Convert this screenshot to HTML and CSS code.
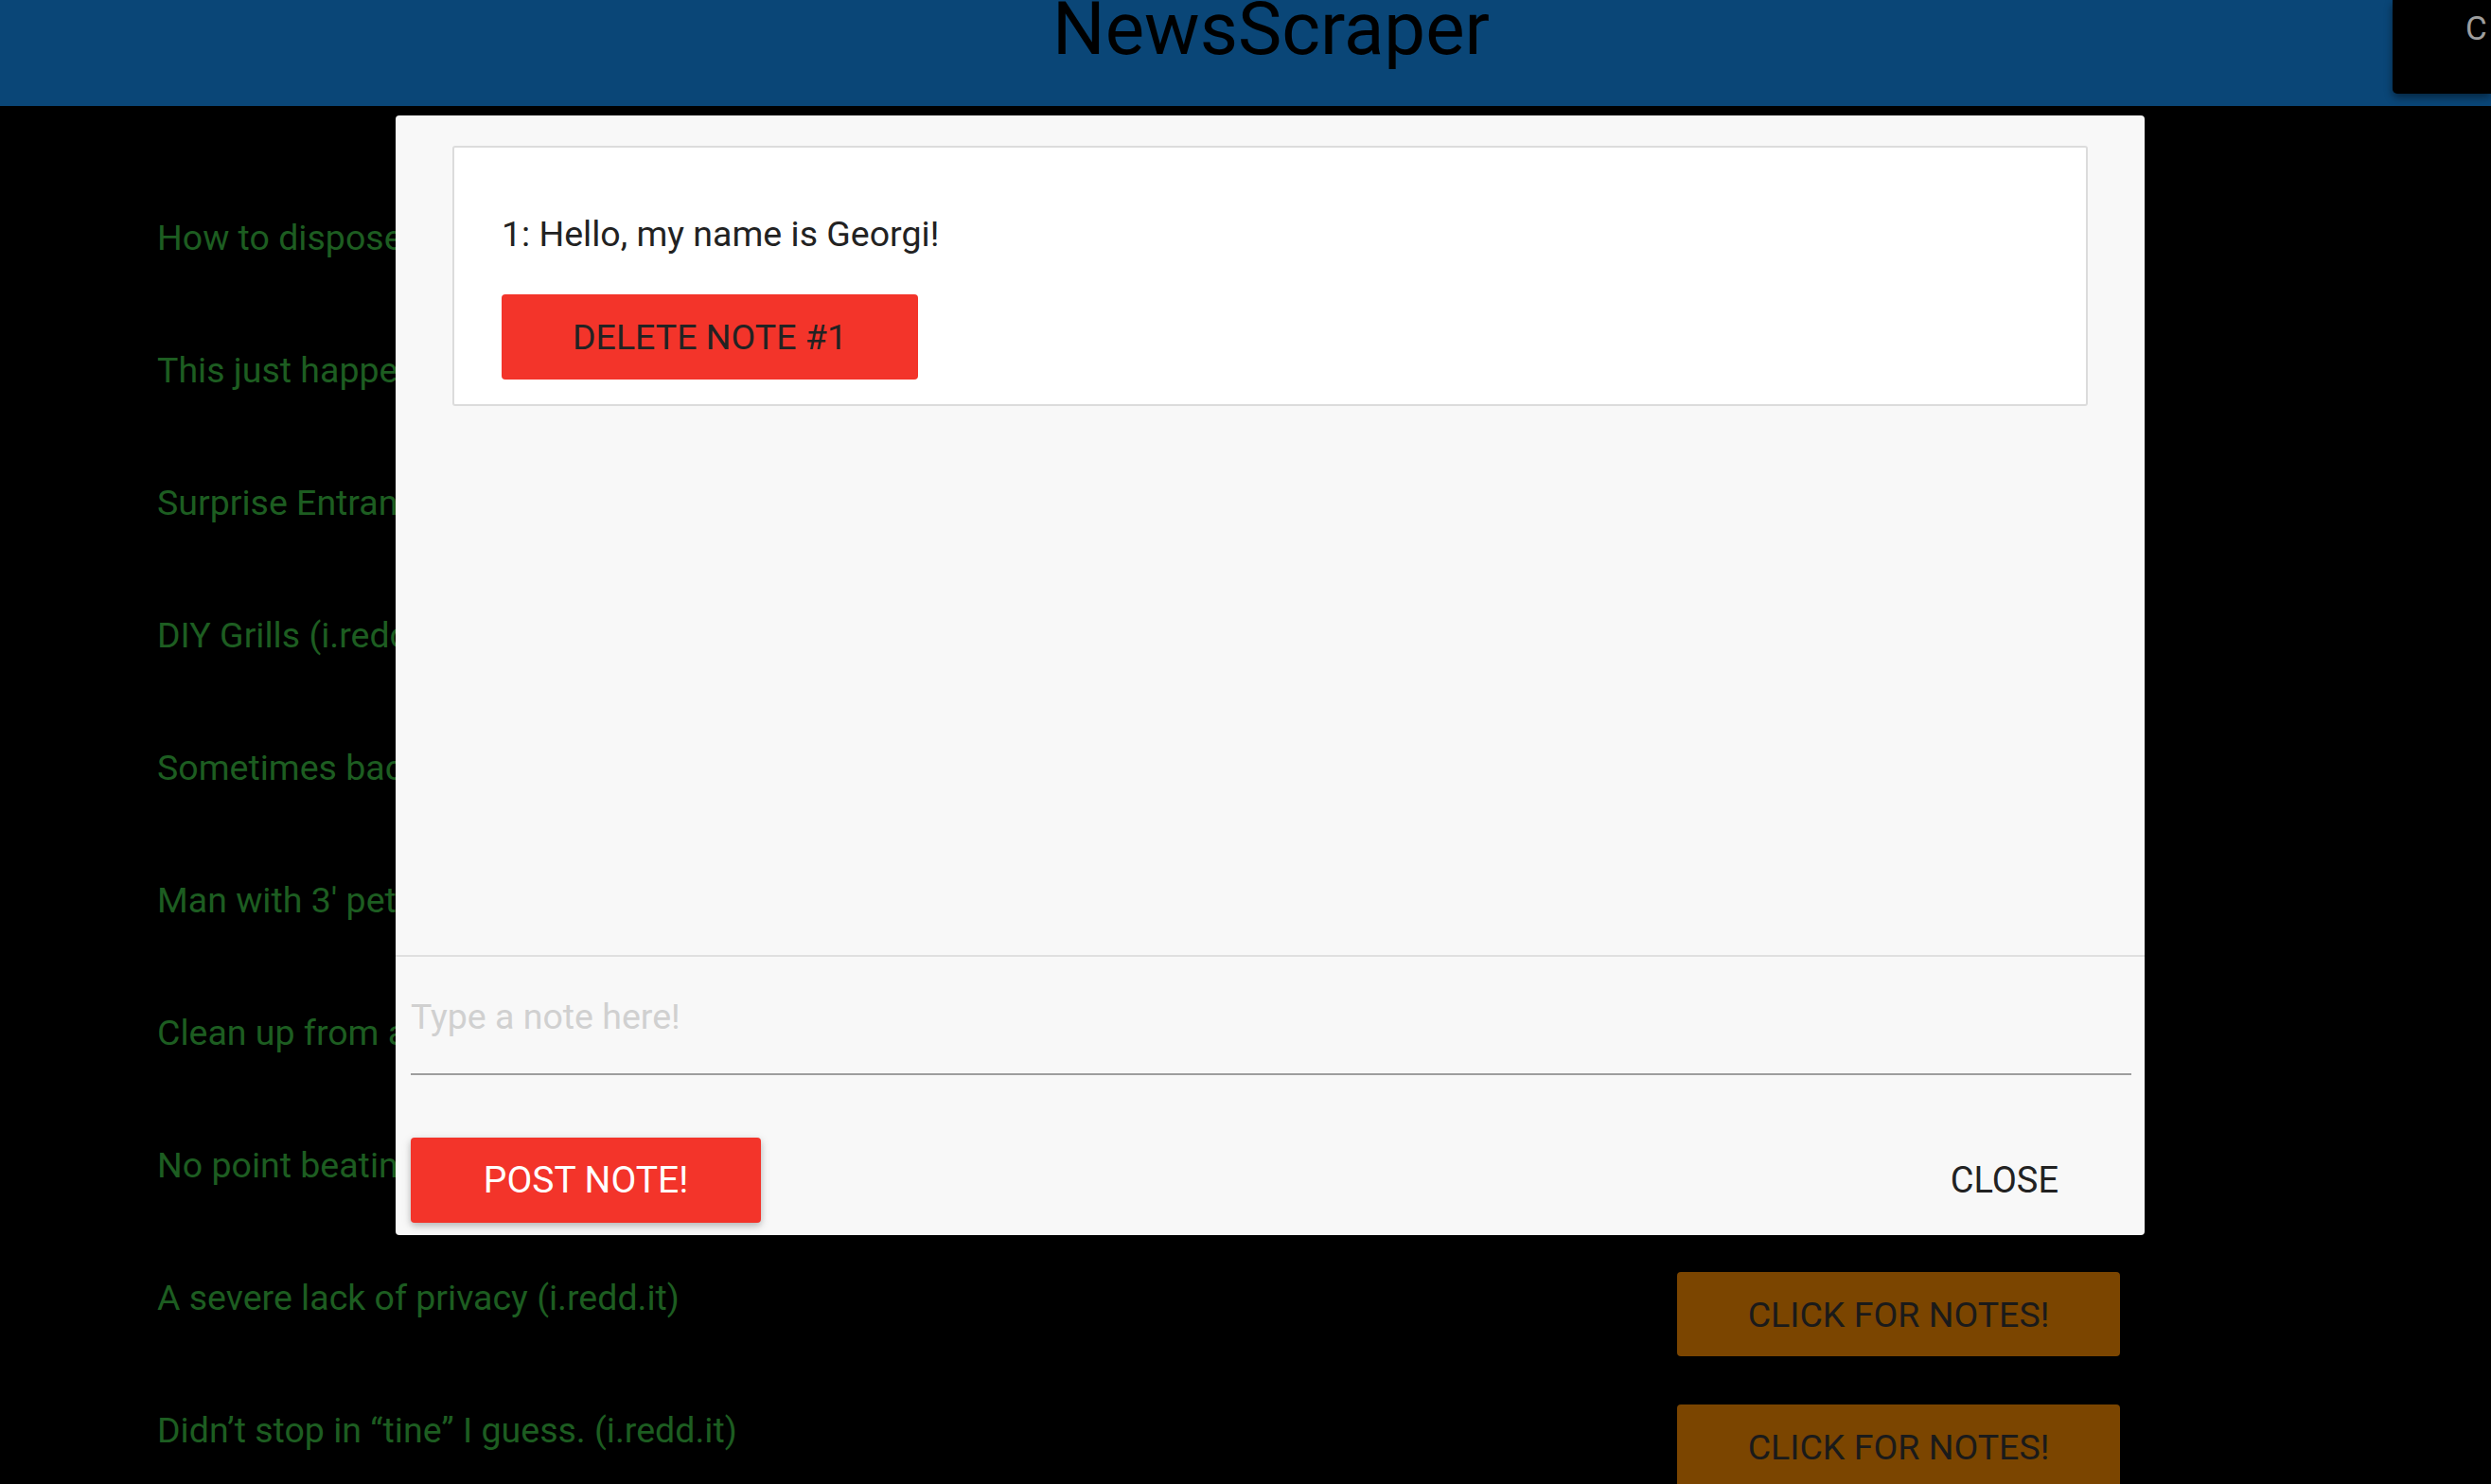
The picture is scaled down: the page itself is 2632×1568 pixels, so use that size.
FILE: index.html
```html
<!DOCTYPE html>
<html lang="en">
<head>
<meta charset="utf-8">
<title>NewsScraper</title>
<link rel="stylesheet" href="styles.css">
</head>
<body>
<header class="topbar">
  <h1 class="brand">NewsScraper</h1>
</header>
<div class="corner-btn"><span class="corner-label">CLEAR</span></div>

<main class="articles">
  <article class="article">
    <p class="article-title">How to dispose of an old mattress (i.redd.it)</p>
    <button class="notes-btn">Click for notes!</button>
  </article>
  <article class="article">
    <p class="article-title">This just happened at work (i.redd.it)</p>
    <button class="notes-btn">Click for notes!</button>
  </article>
  <article class="article">
    <p class="article-title">Surprise Entrance (i.redd.it)</p>
    <button class="notes-btn">Click for notes!</button>
  </article>
  <article class="article">
    <p class="article-title">DIY Grills (i.redd.it)</p>
    <button class="notes-btn">Click for notes!</button>
  </article>
  <article class="article">
    <p class="article-title">Sometimes backup is needed (i.redd.it)</p>
    <button class="notes-btn">Click for notes!</button>
  </article>
  <article class="article">
    <p class="article-title">Man with 3' pet python (i.redd.it)</p>
    <button class="notes-btn">Click for notes!</button>
  </article>
  <article class="article">
    <p class="article-title">Clean up from a storm (i.redd.it)</p>
    <button class="notes-btn">Click for notes!</button>
  </article>
  <article class="article">
    <p class="article-title">No point beating around the bush (i.redd.it)</p>
    <button class="notes-btn">Click for notes!</button>
  </article>
  <article class="article">
    <p class="article-title">A severe lack of privacy (i.redd.it)</p>
    <button class="notes-btn">Click for notes!</button>
  </article>
  <article class="article">
    <p class="article-title">Didn’t stop in “tine” I guess. (i.redd.it)</p>
    <button class="notes-btn">Click for notes!</button>
  </article>
</main>

<div class="modal">
  <div class="modal-content">
    <div class="note-card">
      <p class="note-text">1: Hello, my name is Georgi!</p>
      <button class="delete-btn">Delete note #1</button>
    </div>
  </div>
  <div class="modal-footer">
    <input class="note-input" type="text" placeholder="Type a note here!">
    <div class="modal-actions">
      <button class="post-btn">Post note!</button>
      <button class="close-btn">Close</button>
    </div>
  </div>
</div>
</body>
</html>
```

FILE: styles.css
```css
html, body {
  margin: 0;
  padding: 0;
  overflow: hidden;
  background: #000;
  font-family: Roboto, "Liberation Sans", Arial, sans-serif;
}

.topbar {
  height: 112px;
  background: #0a4677;
  padding-left: 54px;
  box-sizing: border-box;
  overflow: hidden;
}

.brand {
  margin: -8px 0 0;
  font-size: 78px;
  line-height: 78px;
  font-weight: 400;
  color: #000;
  text-align: center;
}

.corner-btn {
  position: absolute;
  top: 0;
  right: 0;
  width: 104px;
  height: 99px;
  box-sizing: border-box;
  padding: 10px 0 0 77px;
  background: #000;
  color: #9e9e9e;
  font-size: 35px;
  line-height: 42px;
  white-space: nowrap;
  overflow: hidden;
  border-bottom-left-radius: 5px;
  box-shadow: 0 4px 8px rgba(0, 0, 0, 0.45);
}

.corner-label {
  display: inline-block;
  width: 25px;
  overflow: hidden;
  vertical-align: top;
}

.articles {
  padding: 114px 392px 0 166px;
}

.article {
  height: 140px;
  display: flex;
  justify-content: space-between;
  align-items: flex-start;
}

.article-title {
  margin: 0;
  font-size: 37.5px;
  line-height: 50px;
  color: #1d5d21;
  white-space: nowrap;
}

.notes-btn {
  flex: none;
  margin-top: 138px;
  width: 468px;
  height: 89px;
  border: none;
  border-radius: 4px;
  background: #7b4500;
  color: #1a1a1a;
  font-family: Roboto, "Liberation Sans", Arial, sans-serif;
  font-size: 37.5px;
  text-transform: uppercase;
  padding: 0;
}

.modal {
  position: absolute;
  top: 122px;
  left: 418px;
  width: 1848px;
  height: 1183px;
  background: #f8f8f8;
  border-radius: 4px;
  display: flex;
  flex-direction: column;
}

.modal-content {
  flex: 1;
  padding: 32px 60px;
}

.note-card {
  background: #fff;
  border: 2px solid #dcdcdc;
  border-radius: 3px;
  padding: 68px 50px 26px;
}

.note-text {
  margin: 0;
  font-size: 37.5px;
  line-height: 46px;
  color: #222;
}

.delete-btn {
  display: block;
  margin-top: 41px;
  width: 440px;
  height: 90px;
  padding: 0;
  border: none;
  border-radius: 4px;
  background: #f3342a;
  color: #222;
  font-family: Roboto, "Liberation Sans", Arial, sans-serif;
  font-size: 37.5px;
  text-transform: uppercase;
}

.modal-footer {
  border-top: 2px solid #e0e0e0;
  padding: 0 14px 13px 16px;
}

.note-input {
  display: block;
  width: 100%;
  height: 46px;
  padding: 40px 0 37px;
  margin: 0;
  border: none;
  border-bottom: 2px solid #9e9e9e;
  background: transparent;
  font-family: Roboto, "Liberation Sans", Arial, sans-serif;
  font-size: 37.5px;
  color: #222;
  outline: none;
}

.note-input::placeholder {
  color: #d0d0d0;
}

.modal-actions {
  margin-top: 66px;
  display: flex;
  justify-content: space-between;
  align-items: center;
}

.post-btn {
  width: 370px;
  height: 90px;
  padding: 0;
  border: none;
  border-radius: 4px;
  background: #f3342a;
  color: #fff;
  font-family: Roboto, "Liberation Sans", Arial, sans-serif;
  font-size: 39px;
  text-transform: uppercase;
  box-shadow: 0 3px 6px rgba(0, 0, 0, 0.18), 0 3px 12px rgba(0, 0, 0, 0.12);
}

.close-btn {
  height: 90px;
  padding: 0 44px;
  margin-right: 33px;
  border: none;
  background: transparent;
  color: #222;
  font-family: Roboto, "Liberation Sans", Arial, sans-serif;
  font-size: 38px;
  text-transform: uppercase;
}
```
